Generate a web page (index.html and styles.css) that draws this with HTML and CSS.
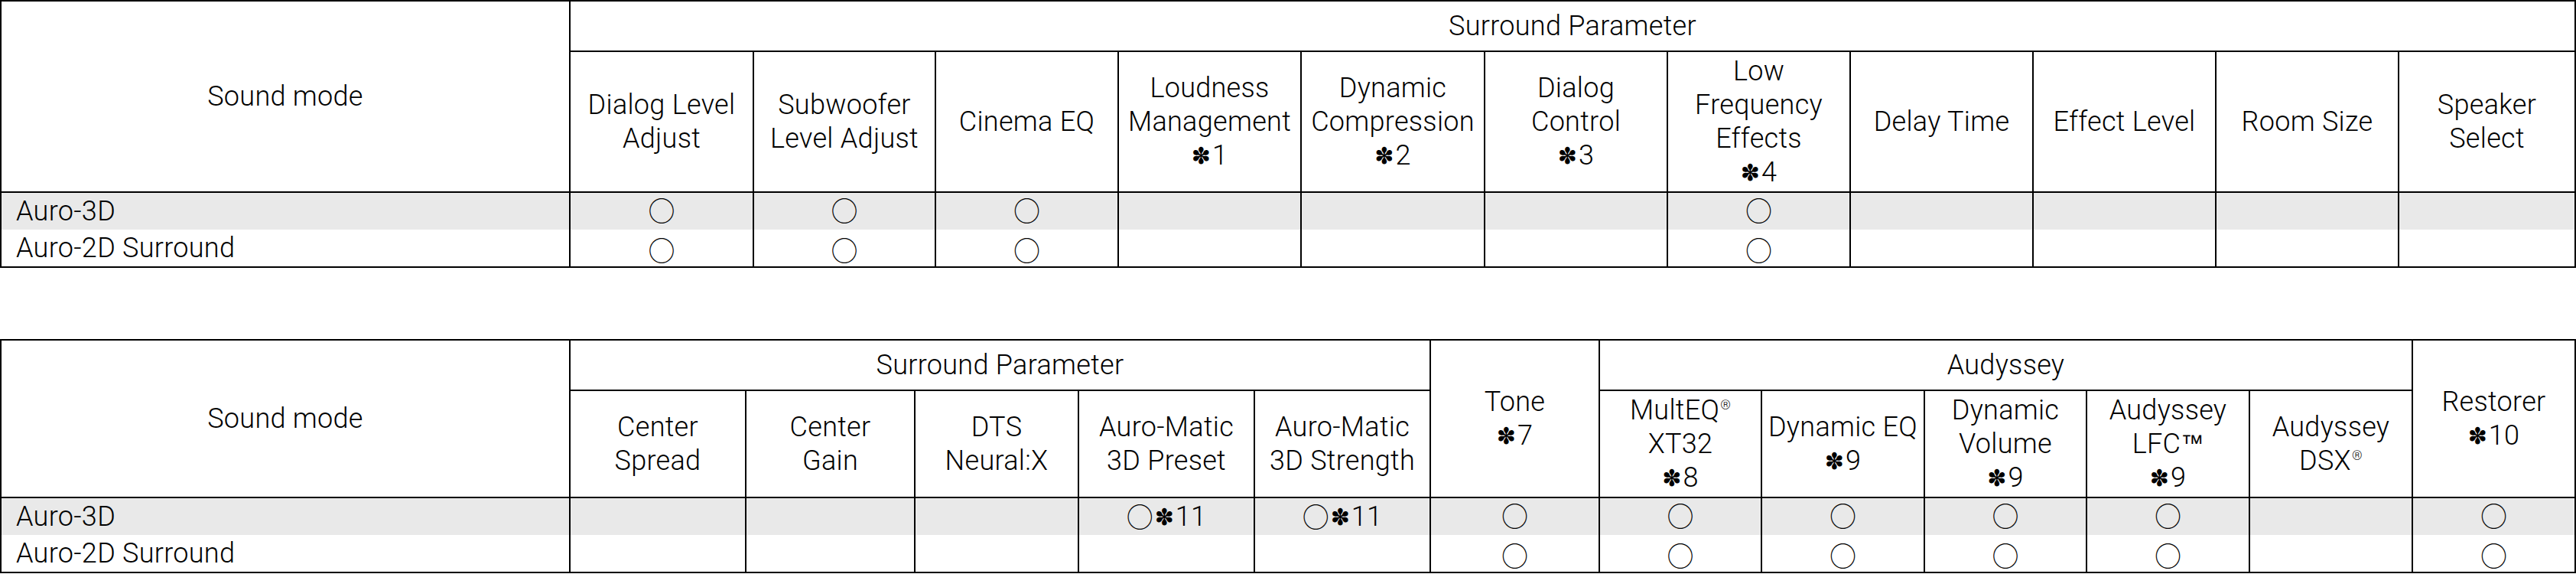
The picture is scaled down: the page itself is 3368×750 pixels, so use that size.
FILE: index.html
```html
<!DOCTYPE html>
<html lang="en">
<head>
<meta charset="utf-8">
<title>Sound mode parameters</title>
<link rel="stylesheet" href="styles.css">
</head>
<body>
<div class="page">
  <div class="tbl t1">
    <div class="c h span2"><span class="t">Sound mode</span></div>
    <div class="c h grp"><span class="t">Surround Parameter</span></div>
    <div class="c h"><span class="t">Dialog Level<br>Adjust</span></div>
    <div class="c h"><span class="t">Subwoofer<br>Level Adjust</span></div>
    <div class="c h"><span class="t">Cinema EQ</span></div>
    <div class="c h"><span class="t">Loudness<br>Management<br><span class="ast">✽</span>1</span></div>
    <div class="c h"><span class="t">Dynamic<br>Compression<br><span class="ast">✽</span>2</span></div>
    <div class="c h"><span class="t">Dialog<br>Control<br><span class="ast">✽</span>3</span></div>
    <div class="c h"><span class="t">Low<br>Frequency<br>Effects<br><span class="ast">✽</span>4</span></div>
    <div class="c h"><span class="t">Delay Time</span></div>
    <div class="c h"><span class="t">Effect Level</span></div>
    <div class="c h"><span class="t">Room Size</span></div>
    <div class="c h"><span class="t">Speaker<br>Select</span></div>

    <div class="c g name"><span class="t">Auro-3D</span></div>
    <div class="c g"><span class="o">○</span></div>
    <div class="c g"><span class="o">○</span></div>
    <div class="c g"><span class="o">○</span></div>
    <div class="c g"></div>
    <div class="c g"></div>
    <div class="c g"></div>
    <div class="c g"><span class="o">○</span></div>
    <div class="c g"></div>
    <div class="c g"></div>
    <div class="c g"></div>
    <div class="c g"></div>

    <div class="c w name"><span class="t">Auro-2D Surround</span></div>
    <div class="c w"><span class="o">○</span></div>
    <div class="c w"><span class="o">○</span></div>
    <div class="c w"><span class="o">○</span></div>
    <div class="c w"></div>
    <div class="c w"></div>
    <div class="c w"></div>
    <div class="c w"><span class="o">○</span></div>
    <div class="c w"></div>
    <div class="c w"></div>
    <div class="c w"></div>
    <div class="c w"></div>
  </div>

  <div class="tbl t2">
    <div class="c h span2"><span class="t">Sound mode</span></div>
    <div class="c h grp"><span class="t">Surround Parameter</span></div>
    <div class="c h span2"><span class="t">Tone<br><span class="ast">✽</span>7</span></div>
    <div class="c h grp"><span class="t">Audyssey</span></div>
    <div class="c h span2"><span class="t">Restorer<br><span class="ast">✽</span>10</span></div>
    <div class="c h"><span class="t">Center<br>Spread</span></div>
    <div class="c h"><span class="t">Center<br>Gain</span></div>
    <div class="c h"><span class="t">DTS<br>Neural:X</span></div>
    <div class="c h"><span class="t">Auro-Matic<br>3D Preset</span></div>
    <div class="c h"><span class="t">Auro-Matic<br>3D Strength</span></div>
    <div class="c h"><span class="t">MultEQ<sup class="reg">®</sup><br>XT32<br><span class="ast">✽</span>8</span></div>
    <div class="c h"><span class="t">Dynamic EQ<br><span class="ast">✽</span>9</span></div>
    <div class="c h"><span class="t">Dynamic<br>Volume<br><span class="ast">✽</span>9</span></div>
    <div class="c h"><span class="t">Audyssey<br>LFC<sup class="tm">™</sup><br><span class="ast">✽</span>9</span></div>
    <div class="c h"><span class="t">Audyssey<br>DSX<sup class="reg">®</sup></span></div>

    <div class="c g name"><span class="t">Auro-3D</span></div>
    <div class="c g"></div>
    <div class="c g"></div>
    <div class="c g"></div>
    <div class="c g"><span class="t"><span class="o">○</span><span class="ast">✽</span>11</span></div>
    <div class="c g"><span class="t"><span class="o">○</span><span class="ast">✽</span>11</span></div>
    <div class="c g"><span class="o">○</span></div>
    <div class="c g"><span class="o">○</span></div>
    <div class="c g"><span class="o">○</span></div>
    <div class="c g"><span class="o">○</span></div>
    <div class="c g"><span class="o">○</span></div>
    <div class="c g"></div>
    <div class="c g"><span class="o">○</span></div>

    <div class="c w name"><span class="t">Auro-2D Surround</span></div>
    <div class="c w"></div>
    <div class="c w"></div>
    <div class="c w"></div>
    <div class="c w"></div>
    <div class="c w"></div>
    <div class="c w"><span class="o">○</span></div>
    <div class="c w"><span class="o">○</span></div>
    <div class="c w"><span class="o">○</span></div>
    <div class="c w"><span class="o">○</span></div>
    <div class="c w"><span class="o">○</span></div>
    <div class="c w"></div>
    <div class="c w"><span class="o">○</span></div>
  </div>
</div>
</body>
</html>
```

FILE: styles.css
```css
html, body {
  margin: 0;
  padding: 0;
  background: #ffffff;
}

body {
  font-family: Roboto, "Liberation Sans", Arial, sans-serif;
  font-weight: 300;
  font-size: 36px;
  color: #000000;
}

.page {
  width: 3368px;
}

.tbl {
  display: grid;
  column-gap: 2px;
  row-gap: 0;
  background: #000000;
  border: 2px solid #000000;
}

.t1 {
  grid-template-columns: 742px 238px 236px 237px 237px 238px 237px 237px 237px 237px 237px 229px;
  grid-template-rows: 66px 184px 48px 48px;
}

.t2 {
  margin-top: 93px;
  grid-template-columns: 742px 228px 219px 212px 228px 228px 219px 210px 211px 210px 211px 211px 211px;
  grid-template-rows: 66px 140px 48px 48px;
}

.c {
  background: #ffffff;
  display: flex;
  align-items: center;
  justify-content: center;
  text-align: center;
  line-height: 44px;
  letter-spacing: 0.3px;
  white-space: nowrap;
}

.t {
  display: block;
}

.h {
  border-bottom: 2px solid #000000;
}

.span2 {
  grid-row: span 2;
}

.t1 .grp {
  grid-column: 2 / -1;
}

.t2 .grp {
  grid-column: span 5;
}

.g {
  background: #e9e9e9;
}

.name {
  justify-content: flex-start;
  padding-left: 19px;
}

.ast {
  font-family: "DejaVu Sans", sans-serif;
  font-weight: 400;
  font-size: 30px;
  vertical-align: 1px;
  margin-right: 2px;
  letter-spacing: 0;
}

.o {
  display: inline-block;
  font-family: "Noto Sans CJK JP", "DejaVu Sans", sans-serif;
  font-weight: 300;
  font-size: 35px;
  line-height: 1;
  letter-spacing: 0;
  position: relative;
}

.g .o {
  top: -3px;
}

.w .o {
  top: 1px;
}

.t .o {
  top: 0;
  vertical-align: -2px;
  margin-right: 2px;
}

sup {
  line-height: 0;
}

.reg {
  font-size: 17px;
  vertical-align: 13px;
  margin-left: 1px;
}

.tm {
  font-family: "Liberation Sans", Arial, sans-serif;
  font-weight: 400;
  font-size: 30px;
  vertical-align: 3px;
  letter-spacing: 0;
}
```
